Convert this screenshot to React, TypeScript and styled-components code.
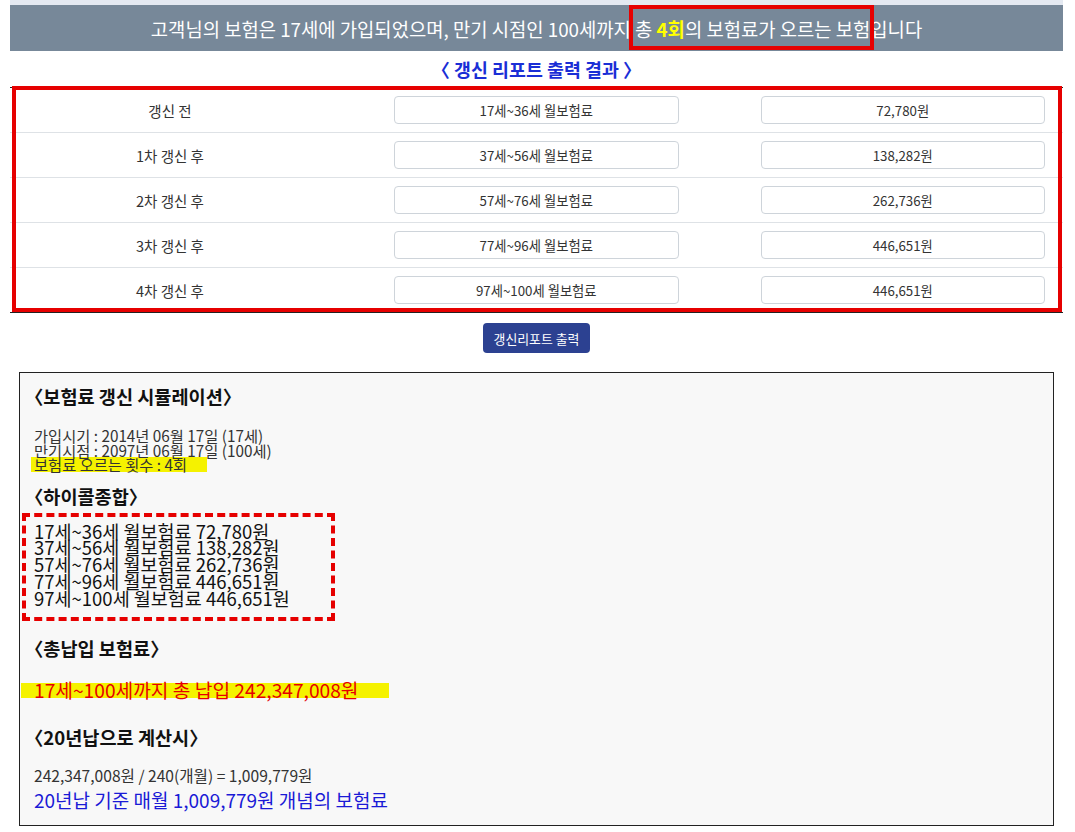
import React from "react";
import styled, { createGlobalStyle } from "styled-components";

const Global = createGlobalStyle`
  html, body { margin: 0; padding: 0; background: #ffffff; }
  body { font-family: "Noto Sans CJK KR", "Noto Sans", sans-serif; color: #333; }
  * { box-sizing: border-box; }
`;

const Page = styled.div`
  padding: 0 12px 0 10px;
  width: 1075px;
`;

const TopStrip = styled.div`
  height: 5px;
  background: #e4e9f1;
`;

const Bar = styled.div`
  height: 46px;
  background: #778899;
  color: #ffffff;
  font-size: 18.8px;
  display: flex;
  justify-content: center;
  align-items: stretch;
  white-space: pre;
`;

const BarPart = styled.span`
  display: flex;
  align-items: center;
`;

const BarMark = styled.span`
  position: relative;
  display: flex;
  align-items: center;
  &::after {
    content: "";
    position: absolute;
    top: 0;
    bottom: 1px;
    left: -6px;
    right: -4px;
    border: 4px solid #e60000;
  }
`;

const Yellow = styled.b`
  color: #ffff00;
  font-weight: 700;
`;

const Title = styled.div`
  height: 36px;
  display: flex;
  align-items: center;
  justify-content: center;
  color: #1a2ed6;
  font-weight: 700;
  font-size: 18.4px;
  font-feature-settings: "halt";
  white-space: pre;
`;

const Table = styled.div`
  position: relative;
  border-top: 1px solid #222;
  border-bottom: 1px solid #222;
  &::after {
    content: "";
    position: absolute;
    top: -2px;
    bottom: 0;
    left: 2px;
    right: 1px;
    border: 4px solid #e60000;
    pointer-events: none;
  }
`;

const Row = styled.div<{ $first?: boolean }>`
  display: grid;
  grid-template-columns: 320px 1fr 1fr;
  align-items: center;
  height: ${(p) => (p.$first ? "44px" : "45px")};
  border-top: ${(p) => (p.$first ? "none" : "1px solid #dee2e6")};
`;

const Label = styled.div`
  text-align: center;
  font-size: 14.5px;
  color: #333;
`;

const Cell = styled.div`
  padding: 0 18px 0 64px;
`;

const Field = styled.div`
  height: 28px;
  border: 1px solid #ced4da;
  border-radius: 4px;
  background: #fff;
  display: flex;
  align-items: center;
  justify-content: center;
  font-size: 13.3px;
  color: #333;
`;

const ButtonRow = styled.div`
  display: flex;
  justify-content: center;
  padding-top: 10px;
`;

const Button = styled.button`
  height: 30px;
  padding: 0 11px;
  background: #2c4191;
  color: #fff;
  border: none;
  border-radius: 4px;
  font-family: inherit;
  font-size: 12.9px;
`;

const SimBox = styled.div`
  margin: 19px 9px 0;
  border: 1px solid #222;
  background: #f8f8f8;
  padding: 11px 14px 13px;
  color: #111;
`;

const Heading = styled.div<{ $gap: number }>`
  margin-top: ${(p) => p.$gap}px;
  font-size: 18.6px;
  line-height: 24px;
  font-weight: 700;
  color: #111;
  font-feature-settings: "halt";
`;

const Info = styled.div`
  margin-top: 20px;
  font-size: 15.3px;
  color: #333;
`;

const InfoLine = styled.div<{ $mark?: boolean }>`
  line-height: 14.5px;
  height: 14.5px;
  width: fit-content;
  white-space: nowrap;
  background: ${(p) => (p.$mark ? "#f5f200" : "transparent")};
  margin-left: ${(p) => (p.$mark ? "-3px" : "0")};
  padding: ${(p) => (p.$mark ? "0 20px 0 3px" : "0")};
`;

const Dashed = styled.div`
  margin: 5px 0 0 -12px;
  width: 313px;
  border: 4px dashed #e60000;
  padding: 6px 0 11px 8px;
`;

const DashLine = styled.div`
  font-size: 18.5px;
  line-height: 16.75px;
  color: #111;
  white-space: nowrap;
`;

const TotalLine = styled.div`
  margin: 23px 0 0 -13px;
  width: fit-content;
  height: 15px;
  line-height: 15px;
  padding: 0 30px 0 13px;
  background: #f5f200;
  color: #e60000;
  font-size: 19.2px;
  white-space: nowrap;
`;

const Calc = styled.div`
  margin-top: 17px;
  font-size: 15.6px;
  line-height: 18px;
  color: #333;
`;

const BlueLine = styled.div`
  margin-top: 4px;
  font-size: 19px;
  line-height: 24px;
  color: #1a1ad6;
`;

const rows = [
  { label: "갱신 전", range: "17세~36세 월보험료", amount: "72,780원" },
  { label: "1차 갱신 후", range: "37세~56세 월보험료", amount: "138,282원" },
  { label: "2차 갱신 후", range: "57세~76세 월보험료", amount: "262,736원" },
  { label: "3차 갱신 후", range: "77세~96세 월보험료", amount: "446,651원" },
  { label: "4차 갱신 후", range: "97세~100세 월보험료", amount: "446,651원" },
];

export default function App() {
  return (
    <>
      <Global />
      <Page>
        <TopStrip />
        <Bar>
          <BarPart>고객님의 보험은 17세에 가입되었으며, 만기 시점인 100세까지 </BarPart>
          <BarMark>
            총 <Yellow>4회</Yellow>의 보험료가 오르는 보험
          </BarMark>
          <BarPart>입니다</BarPart>
        </Bar>
        <Title>〈 갱신 리포트 출력 결과 〉</Title>
        <Table>
          {rows.map((r, i) => (
            <Row key={r.label} $first={i === 0}>
              <Label>{r.label}</Label>
              <Cell>
                <Field>{r.range}</Field>
              </Cell>
              <Cell>
                <Field>{r.amount}</Field>
              </Cell>
            </Row>
          ))}
        </Table>
        <ButtonRow>
          <Button type="button">갱신리포트 출력</Button>
        </ButtonRow>
        <SimBox>
          <Heading $gap={0}>〈보험료 갱신 시뮬레이션〉</Heading>
          <Info>
            <InfoLine>가입시기 : 2014년 06월 17일 (17세)</InfoLine>
            <InfoLine>만기시점 : 2097년 06월 17일 (100세)</InfoLine>
            <InfoLine $mark>보험료 오르는 횟수 : 4회</InfoLine>
          </Info>
          <Heading $gap={12}>〈하이콜종합〉</Heading>
          <Dashed>
            {rows.map((r) => (
              <DashLine key={r.label}>
                {r.range} {r.amount}
              </DashLine>
            ))}
          </Dashed>
          <Heading $gap={15}>〈총납입 보험료〉</Heading>
          <TotalLine>17세~100세까지 총 납입 242,347,008원</TotalLine>
          <Heading $gap={27}>〈20년납으로 계산시〉</Heading>
          <Calc>242,347,008원 / 240(개월) = 1,009,779원</Calc>
          <BlueLine>20년납 기준 매월 1,009,779원 개념의 보험료</BlueLine>
        </SimBox>
      </Page>
    </>
  );
}
